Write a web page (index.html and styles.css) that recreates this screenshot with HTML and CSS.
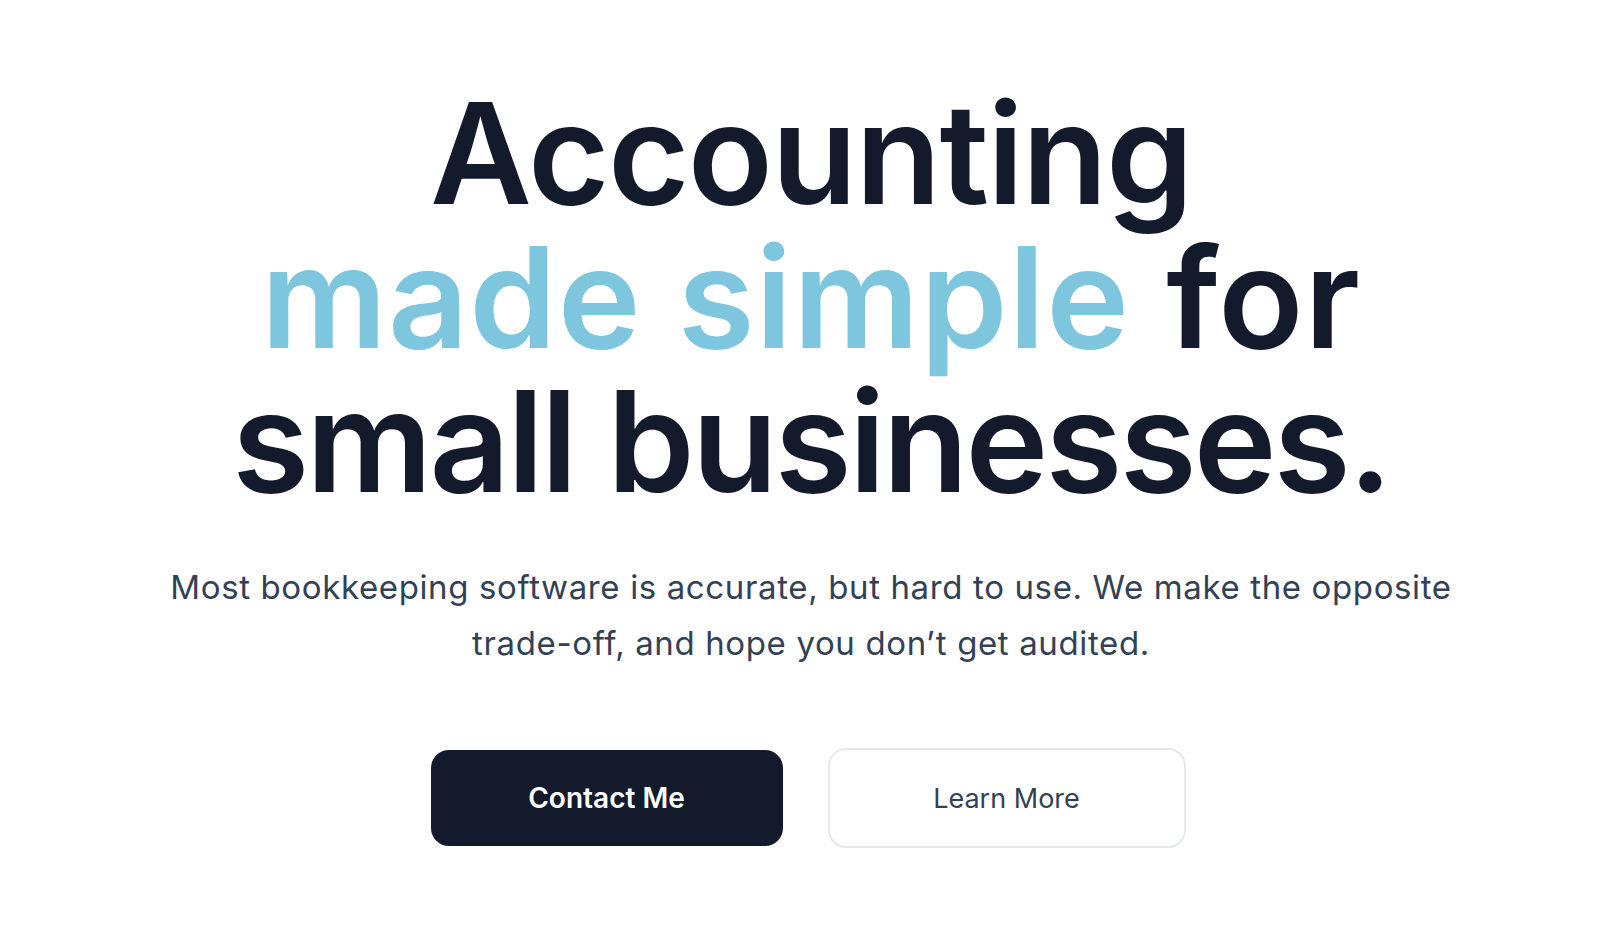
FILE: index.html
```html
<!DOCTYPE html>
<html lang="en">
<head>
<meta charset="utf-8">
<title>Accounting made simple</title>
<link rel="stylesheet" href="styles.css">
</head>
<body>
<main class="hero">
  <h1 class="hero-title">
    <span class="title-line">Accounting</span>
    <span class="title-line title-line--loose"><span class="accent">made simple</span> for</span>
    <span class="title-line title-line--tight">small businesses.</span>
  </h1>
  <p class="hero-lead">Most bookkeeping software is accurate, but hard to use. We make the opposite trade-off, and hope you don’t get audited.</p>
  <div class="hero-actions">
    <a class="btn btn-primary" href="#">Contact Me</a>
    <a class="btn btn-outline" href="#">Learn More</a>
  </div>
</main>
</body>
</html>
```

FILE: styles.css
```css
* { box-sizing: border-box; }

html, body {
  margin: 0;
  padding: 0;
  background: #ffffff;
}

body {
  font-family: Inter, "Liberation Sans", sans-serif;
  color: #111827;
}

.hero {
  display: flex;
  flex-direction: column;
  align-items: center;
  padding-top: 81px;
  text-align: center;
}

.hero-title {
  margin: 0;
  display: flex;
  flex-direction: column;
  align-items: center;
  font-family: Inter, "Liberation Sans", sans-serif;
  font-weight: 600;
  font-size: 140px;
  line-height: 144px;
  letter-spacing: -0.012em;
  color: #131a2b;
}

.title-line {
  display: block;
  white-space: nowrap;
}

.title-line--loose {
  letter-spacing: 0.007em;
}

.title-line--tight {
  letter-spacing: -0.02em;
}

.accent {
  color: #7ec5de;
}

.hero-lead {
  margin: 46px 0 0;
  max-width: 1320px;
  font-size: 33px;
  line-height: 56px;
  letter-spacing: 0.019em;
  color: #334155;
}

.hero-actions {
  display: flex;
  align-items: center;
  gap: 45px;
  margin-top: 77px;
  margin-right: 6px;
}

.btn {
  display: flex;
  align-items: center;
  justify-content: center;
  text-decoration: none;
  border-radius: 18px;
}

.btn-primary {
  width: 352px;
  height: 96px;
  background: #131a2b;
  color: #ffffff;
  font-size: 28px;
  font-weight: 600;
}

.btn-outline {
  width: 358px;
  height: 100px;
  background: #ffffff;
  border: 2px solid #e5e9f0;
  color: #334155;
  font-size: 27px;
  font-weight: 400;
}
```
